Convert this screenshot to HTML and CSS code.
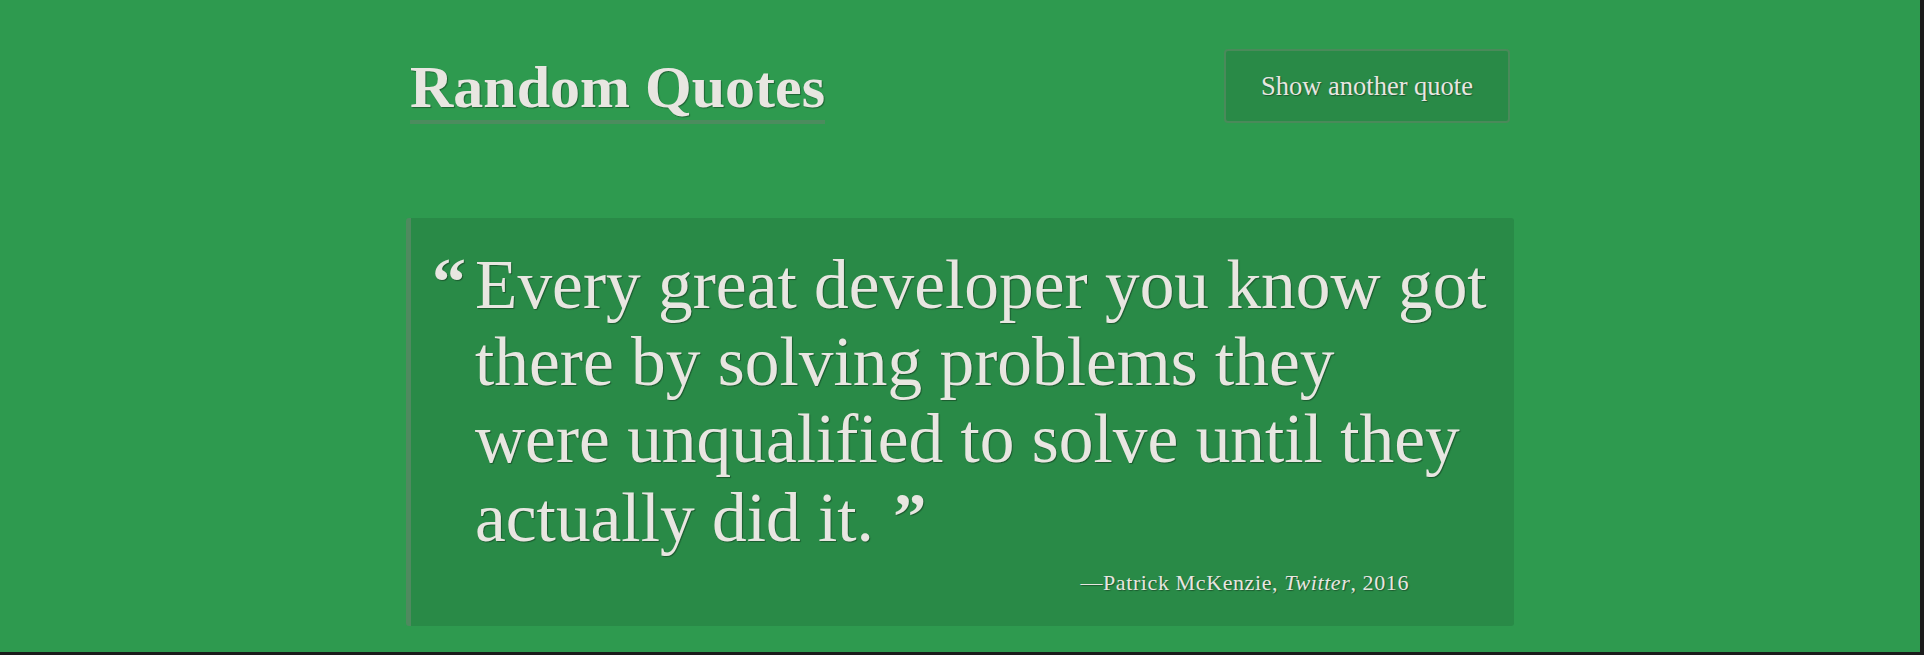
FILE: index.html
```html
<!DOCTYPE html>
<html lang="en">
<head>
<meta charset="utf-8">
<title>Random Quotes</title>
<link rel="stylesheet" href="styles.css">
</head>
<body>
<div class="page">
  <div class="container">
    <header class="header">
      <h1 class="title">Random Quotes</h1>
      <button class="btn" type="button">Show another quote</button>
    </header>
    <figure class="quote-box">
      <blockquote class="quote-text">Every great developer you know got<br>there by solving problems they<br>were unqualified to solve until they<br>actually did it. <span class="mark-close">&#8221;</span></blockquote>
      <figcaption class="attribution">&mdash;Patrick McKenzie, <cite>Twitter</cite>, 2016</figcaption>
    </figure>
  </div>
</div>
</body>
</html>
```

FILE: styles.css
```css
html {
  background: #1b1b1b;
}

body {
  margin: 0;
}

.page {
  width: 1920px;
  height: 652px;
  box-sizing: border-box;
  padding-top: 49px;
  overflow: hidden;
  background: #2e9a4f;
  color: #e8e6e1;
  font-family: "Liberation Serif", "Times New Roman", serif;
  text-shadow: 1px 1px 1px rgba(0, 0, 0, 0.35);
}

.container {
  width: 1108px;
  margin: 0 auto;
}

.header {
  display: flex;
  justify-content: space-between;
  align-items: flex-start;
  padding: 0 4px;
}

.title {
  margin: 8px 0 0;
  font-size: 60px;
  font-weight: 700;
  line-height: 1;
  padding-bottom: 3px;
  border-bottom: 4px solid #4c8c5e;
}

.btn {
  font-family: "Liberation Serif", "Times New Roman", serif;
  font-size: 26.5px;
  line-height: 1;
  color: #e8e6e1;
  text-shadow: 1px 1px 1px rgba(0, 0, 0, 0.35);
  background: #298a47;
  border: 2px solid #4a8a5a;
  border-radius: 4px;
  padding: 22px 35px 21px;
  cursor: pointer;
}

.quote-box {
  margin: 94px 0 0;
  background: #298a47;
  border-left: 5px solid #4f8a5f;
  border-radius: 3px;
  padding: 28px 20px 28px 64px;
}

.quote-text {
  position: relative;
  margin: 0;
  font-size: 69.4px;
  line-height: 77px;
  white-space: nowrap;
}

.quote-text::before {
  content: "\201C";
  position: absolute;
  left: -43px;
  top: -2px;
  font-size: 68px;
  font-weight: 700;
  line-height: 77px;
}

.mark-close {
  font-size: 66px;
  font-weight: 700;
  vertical-align: 3px;
  margin-left: 2px;
}

.attribution {
  margin-top: 12px;
  font-size: 22px;
  letter-spacing: 0.6px;
  line-height: 30px;
  text-align: right;
  padding-right: 85px;
}
```
